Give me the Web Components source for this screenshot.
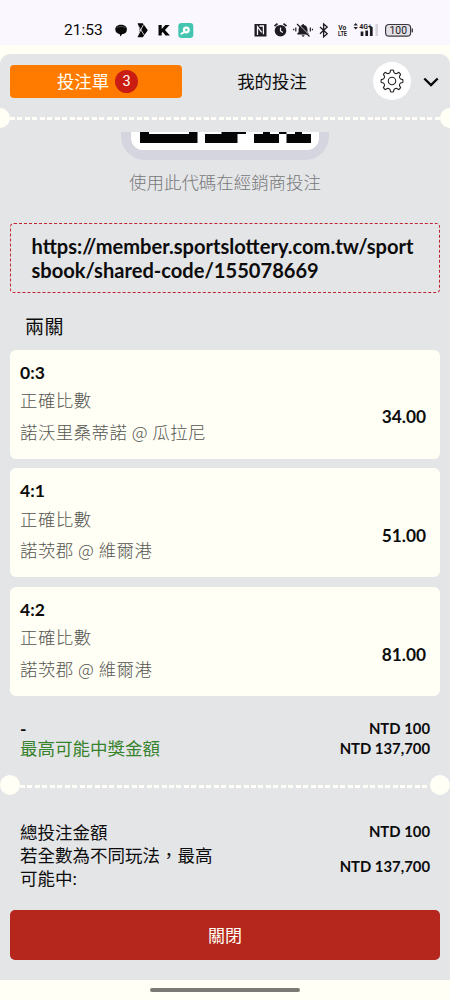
<!DOCTYPE html>
<html lang="zh-Hant">
<head>
<meta charset="utf-8">
<meta name="viewport" content="width=device-width, initial-scale=1">
<title>投注單</title>
<style>
  html, body { margin: 0; height: 100%; }
  body {
    background: #fffff5;
    color: #0c0c0c;
    font-family: Lato, "Noto Sans CJK TC", sans-serif;
    overflow: hidden;
  }
</style>
</head>
<body>
<bet-app></bet-app>

<script>
class StatusBar extends HTMLElement {
  constructor() {
    super();
    this.attachShadow({ mode: "open" });
  }
  connectedCallback() {
    this.shadowRoot.innerHTML = /*html*/ `
      <style>${StatusBar.styles}</style>
      <span class="time">21:53</span>
      <svg class="left" width="90" height="20" viewBox="110 20 90 20">
        <path d="M115.300 29.400c0-2.900 2.500-4.600 5.700-4.600s5.900 1.700 5.900 4.600-2.200 4.600-4.900 4.800l-1.500 2.200-.9-2.500c-2.600-.6-4.300-2.100-4.300-4.500z" fill="#090909"/>
        <path d="M116.500 27.300q4.500-1.800 9 0" fill="none" stroke="#77747a" stroke-width=".6"/>
        <path d="M137.600 23.300h5.200l5 7-5 7h-5.200l2.200-7z" fill="#090909"/>
        <path d="M143.500 24.500l-5.500 11M138 25.500l6.500 10" stroke="#fbf7ff" stroke-width=".8"/>
        <path d="M158.500 25h3.200v4l3.600-4h4.300l-4.600 4.900 4.900 5.700h-4.300l-2.900-3.600-1 1.100v2.500h-3.200z" fill="#090909"/>
        <rect x="178.300" y="23" width="15" height="15" rx="3.200" fill="#43c5b0"/>
        <circle cx="186.300" cy="30" r="2.300" fill="none" stroke="#fff" stroke-width="2.300"/>
        <path d="M183.500 32.500l-2.200 1.300" stroke="#fff" stroke-width="1.800" stroke-linecap="round"/>
      </svg>
      <svg class="right" width="170" height="24" viewBox="250 18 170 24">
        <path d="M254.500 24h12v12.500h-12z" fill="#1e1b22"/>
        <path d="M257.500 35v-8.300l4.200 5.600M259.500 26h3.900v8.200" fill="none" stroke="#fbf7ff" stroke-width="1.300"/>
        <circle cx="280.500" cy="30.700" r="5.800" fill="#1e1b22"/>
        <path d="M274.500 26.200l3-2.500M286.500 26.200l-3-2.500" stroke="#1e1b22" stroke-width="1.700"/>
        <path d="M280.500 27.500v3.500l2.300 1.500" fill="none" stroke="#fbf7ff" stroke-width="1.200"/>
        <path d="M297.300 34.500v-1l1.300-1.300v-2.600c0-2.700 1.700-4.200 3.800-4.700v-.9h1.400v.9c2.300.5 3.700 2.200 3.700 4.700v2.600l1.300 1.300v1zM301.700 35.300h2.800c0 .9-.6 1.400-1.400 1.400s-1.400-.5-1.400-1.400z" fill="#1e1b22"/>
        <path d="M298.300 24l12.500 12.500" stroke="#fbf7ff" stroke-width="1"/>
        <path d="M297 24l12.500 12.500M295.800 27.500v4M293.700 28.800v1.400M310.300 27.500v4M312.400 28.800v1.400" stroke="#1e1b22" stroke-width="1.200"/>
        <path d="M320 27l7.200 6.800-3.600 3.100V24l3.600 3-7.200 6.800" fill="none" stroke="#1e1b22" stroke-width="1.300"/>
        <text x="338.200" y="29.700" class="tiny" textLength="8" lengthAdjust="spacingAndGlyphs">Vo</text>
        <text x="338" y="36.200" class="tiny" textLength="9" lengthAdjust="spacingAndGlyphs">LTE</text>
        <path d="M353.500 25.500l2.200-2.500 2.200 2.500zM353.500 27l2.200 2.500 2.200-2.500z" fill="#1e1b22"/>
        <text x="359.200" y="29" class="net" textLength="12.500" lengthAdjust="spacingAndGlyphs">4G+</text>
        <path d="M362 31.500v4.500M366.700 30.500v5.500M371.300 27v9" stroke="#1e1b22" stroke-width="2.700"/>
        <path d="M376.700 24v12" stroke="#d7d3da" stroke-width="2.500"/>
        <rect x="385.600" y="24.500" width="25" height="11.700" rx="3.500" fill="#e4e0e8" stroke="#3a373d" stroke-width="1.200"/>
        <path d="M412.300 28.500v3.800" stroke="#3a373d" stroke-width="1.300"/>
        <text x="389.500" y="34.100" class="battery" textLength="17.500" lengthAdjust="spacingAndGlyphs">100</text>
      </svg>
    `;
  }

  static get styles() {
    return /*css*/ `
      :host {
        display: flex;
        align-items: center;
        height: 45px;
        background: #fbf7ff;
        box-sizing: border-box;
        padding: 15px 30px 0 64px;
        font-family: Roboto, sans-serif;
      }
      .time { width: 46px; font-size: 15.500px; line-height: 30px; color: #0a0a0a; white-space: nowrap; }
      svg { display: block; }
      .right { margin-left: auto; }
      .tiny { font: bold 7px Roboto, sans-serif; fill: #1e1b22; }
      .net { font: bold 8px Roboto, sans-serif; fill: #1e1b22; }
      .battery { font: 400 10px Roboto, sans-serif; fill: #1e1b22; }
    `;
  }
}
customElements.define("status-bar", StatusBar);

class TabBar extends HTMLElement {
  constructor() {
    super();
    this.attachShadow({ mode: "open" });
  }
  connectedCallback() {
    this.shadowRoot.innerHTML = /*html*/ `
      <style>${TabBar.styles}</style>
      <div class="tab active"><span class="name">投注單</span><span class="badge">${this.getAttribute("count")}</span></div>
      <div class="tab"><span class="name">我的投注</span></div>
      <div class="gear">
        <svg width="24" height="24" viewBox="0 0 24 24" fill="none" stroke="#222" stroke-width="1.100" stroke-linejoin="round">
          <path d="${TabBar.gear()}"/>
          <circle cx="12" cy="12" r="3.700"/>
        </svg>
      </div>
      <svg class="arrow" width="16" height="12" viewBox="0 0 16 12" fill="none" stroke="#0a0a0a" stroke-width="2.400">
        <path d="M1.300 2.500l6.700 6.500 6.700-6.500"/>
      </svg>
    `;
  }
  // eight rounded teeth
  static gear() {
    const points = [];
    const at = (radius, degrees) => {
      const a = (degrees * Math.PI) / 180;
      return `${(12 + radius * Math.sin(a)).toFixed(2)} ${(12 - radius * Math.cos(a)).toFixed(2)}`;
    };
    for (let i = 0; i < 8; i++) {
      const d = i * 45;
      points.push(`${i ? "L" : "M"}${at(9, d - 12)}L${at(10.8, d - 8)}Q${at(11.3, d)} ${at(10.8, d + 8)}L${at(9, d + 12)}Q${at(7.6, d + 22.5)} ${at(9, d + 33)}`);
    }
    return points.join("") + "Z";
  }

  static get styles() {
    return /*css*/ `
      :host {
        display: grid;
        grid-template-columns: 172px 180px 48px 1fr;
        align-items: center;
        height: 62px;
        box-sizing: border-box;
        padding: 0 10px 8px;
      }
      .tab {
        display: flex;
        align-items: center;
        justify-content: center;
        height: 33px;
        font-size: 17.400px;
      }
      .name { padding-bottom: 2px; }
      .active { background: #ff7b00; color: #fffff5; border-radius: 4px; gap: 6px; padding-left: 3px; box-sizing: border-box; }
      .badge {
        width: 23px;
        height: 23px;
        border-radius: 50%;
        background: #c91d14;
        font: 14.500px/23px Roboto, sans-serif;
        text-align: center;
      }
      .gear {
        display: flex;
        align-items: center;
        justify-content: center;
        width: 38px;
        height: 38px;
        border-radius: 50%;
        background: #fff;
        margin-left: 10.500px;
      }
      .arrow { justify-self: end; margin: 2px 1px 0 0; }
    `;
  }
}
customElements.define("tab-bar", TabBar);

class TicketDivider extends HTMLElement {
  constructor() {
    super();
    this.attachShadow({ mode: "open" });
  }
  connectedCallback() {
    this.shadowRoot.innerHTML = /*html*/ `
      <style>${TicketDivider.styles}</style>
      <i></i><b></b><i></i>
    `;
  }

  static get styles() {
    return /*css*/ `
      :host { display: flex; align-items: center; height: 20px; }
      :host([edge]) { margin: 0 -10px; }
      i { flex: none; width: 20px; height: 20px; border-radius: 50%; background: #fffff5; }
      b {
        flex: 1;
        height: 3px;
        margin-top: 1.500px;
        background: repeating-linear-gradient(90deg, #fffff8 0 5px, transparent 5px 7.450px);
      }
    `;
  }
}
customElements.define("ticket-divider", TicketDivider);

class ShareCode extends HTMLElement {
  constructor() {
    super();
    this.attachShadow({ mode: "open" });
  }
  connectedCallback() {
    this.shadowRoot.innerHTML = /*html*/ `
      <style>${ShareCode.styles}</style>
      <div class="frame">
        <svg width="188" height="18" viewBox="131 132 188 18">
          <path d="M131 132h188v6a12 12 0 0 1-12 12H143a12 12 0 0 1-12-12z" fill="#fff"/>
          <path d="M140 132h9v2h40v-2h8.500v11H140zM205 134h16.500v-2h24.500v2h-8.500v9H205zM254 134h9v-2h7v2h9v9h-25zM279 132h7.500v2h-7.500zM286.500 134h8.500v-2h7v2h9v9h-24.500z" fill="#050505"/>
        </svg>
      </div>
      <p>使用此代碼在經銷商投注</p>
      <div class="link"><slot></slot></div>
    `;
  }

  static get styles() {
    return /*css*/ `
      :host { display: block; padding: 4px 10px 0; }
      .frame {
        width: 188px;
        height: 18px;
        margin: 0 auto;
        padding: 0 10px 10px;
        background: #d4d5de;
        border-radius: 0 0 24px 24px;
      }
      svg { display: block; }
      p { margin: 10px 0 0; font-size: 17.450px; line-height: 26px; text-align: center; color: #77787a; font-weight: 300; }
      .link {
        box-sizing: border-box;
        height: 70px;
        margin-top: 27px;
        padding: 10px 20px 10px 20.500px;
        border: 1px dashed #c02433;
        border-radius: 4px;
        font-size: 20.100px;
        line-height: 24px;
        font-weight: 700;
        word-break: break-all;
      }
    `;
  }
}
customElements.define("share-code", ShareCode);

class BetCard extends HTMLElement {
  constructor() {
    super();
    this.attachShadow({ mode: "open" });
  }
  connectedCallback() {
    this.shadowRoot.innerHTML = /*html*/ `
      <style>${BetCard.styles}</style>
      <div class="info">
        <div class="score">${this.getAttribute("score")}</div>
        <div class="line">正確比數</div>
        <div class="line"><slot></slot></div>
      </div>
      <div class="odds">${this.getAttribute("odds")}</div>
    `;
  }

  static get styles() {
    return /*css*/ `
      :host {
        display: flex;
        justify-content: space-between;
        align-items: center;
        box-sizing: border-box;
        height: 109px;
        padding: 0 14px 0 10px;
        background: #fffff5;
        border-radius: 6px;
      }
      .info { align-self: flex-start; padding-top: 10px; }
      .score { font-size: 17.500px; line-height: 25px; font-weight: 700; }
      .line { font-size: 17.400px; line-height: 31.600px; letter-spacing: .5px; color: #555551; font-weight: 300; font-family: "Noto Sans CJK TC", sans-serif; }
      .info .line:nth-child(2) { margin-top: -.4px; }
      .odds { font-size: 17.300px; line-height: 24px; font-weight: 700; padding-top: 26.500px; }
    `;
  }
}
customElements.define("bet-card", BetCard);

class SummaryRow extends HTMLElement {
  constructor() {
    super();
    this.attachShadow({ mode: "open" });
  }
  connectedCallback() {
    this.shadowRoot.innerHTML = /*html*/ `
      <style>${SummaryRow.styles}</style>
      <div class="label"><slot></slot></div>
      <div class="amount">${this.getAttribute("amount")}</div>
    `;
  }

  static get styles() {
    return /*css*/ `
      :host { display: flex; justify-content: space-between; align-items: center; padding: 0 20px; line-height: 20px; }
      .label { width: 195px; font-size: 17.500px; }
      .amount { font-size: 14.850px; font-weight: 700; white-space: nowrap; padding-bottom: 1px; margin: -1px 0 0; }
      :host([plain]) .label { font-weight: 700; }
      :host([win]) .label { color: #36822d; }
      :host([total]) { line-height: 23px; }
    `;
  }
}
customElements.define("summary-row", SummaryRow);

class BetApp extends HTMLElement {
  constructor() {
    super();
    this.attachShadow({ mode: "open" });
  }
  connectedCallback() {
    this.shadowRoot.innerHTML = /*html*/ `
      <style>${BetApp.styles}</style>
      <status-bar></status-bar>
      <main>
        <tab-bar count="3"></tab-bar>
        <ticket-divider edge></ticket-divider>
        <share-code>https://member.sportslottery.com.tw/sportsbook/shared-code/155078669</share-code>
        <h2>兩關</h2>
        <section class="bets">
          <bet-card score="0:3" odds="34.00">諾沃里桑蒂諾 @ 瓜拉尼</bet-card>
          <bet-card score="4:1" odds="51.00">諾茨郡 @ 維爾港</bet-card>
          <bet-card score="4:2" odds="81.00">諾茨郡 @ 維爾港</bet-card>
        </section>
        <section class="sum">
          <summary-row plain amount="NTD 100">-</summary-row>
          <summary-row win amount="NTD 137,700">最高可能中獎金額</summary-row>
        </section>
        <ticket-divider></ticket-divider>
        <section class="total">
          <summary-row total amount="NTD 100">總投注金額</summary-row>
          <summary-row total amount="NTD 137,700">若全數為不同玩法，最高可能中:</summary-row>
        </section>
        <button>關閉</button>
      </main>
      <div class="home"></div>
    `;
  }

  static get styles() {
    return /*css*/ `
      :host { display: flex; flex-direction: column; height: 1000px; overflow: hidden; }
      main {
        box-sizing: border-box;
        height: 926px;
        margin-top: 9px;
        background: #e4e5e7;
        border-radius: 10px 10px 0 0;
        overflow: hidden;
      }
      tab-bar { margin-bottom: -8px; }
      h2 { margin: 20px 25px 8.500px; font-size: 19px; line-height: 28px; font-weight: 400; letter-spacing: .5px; }
      .bets { display: grid; gap: 9.700px; padding: 0 10px; }
      .sum { padding: 22.700px 0 16.800px; }
      .total { padding: 26px 0 19.500px; }
      button {
        display: block;
        width: 430px;
        height: 50px;
        margin: 0 10px;
        border: 0;
        border-radius: 5px;
        background: #b5261c;
        color: #fffff5;
        font: 400 17px "Noto Sans CJK TC", sans-serif;
        padding-bottom: 2px;
      }
      .home { width: 150px; height: 4px; margin: 7.500px auto 0; border-radius: 2px; background: #7c7a74; }
    `;
  }
}
customElements.define("bet-app", BetApp);
</script>
</body>
</html>
